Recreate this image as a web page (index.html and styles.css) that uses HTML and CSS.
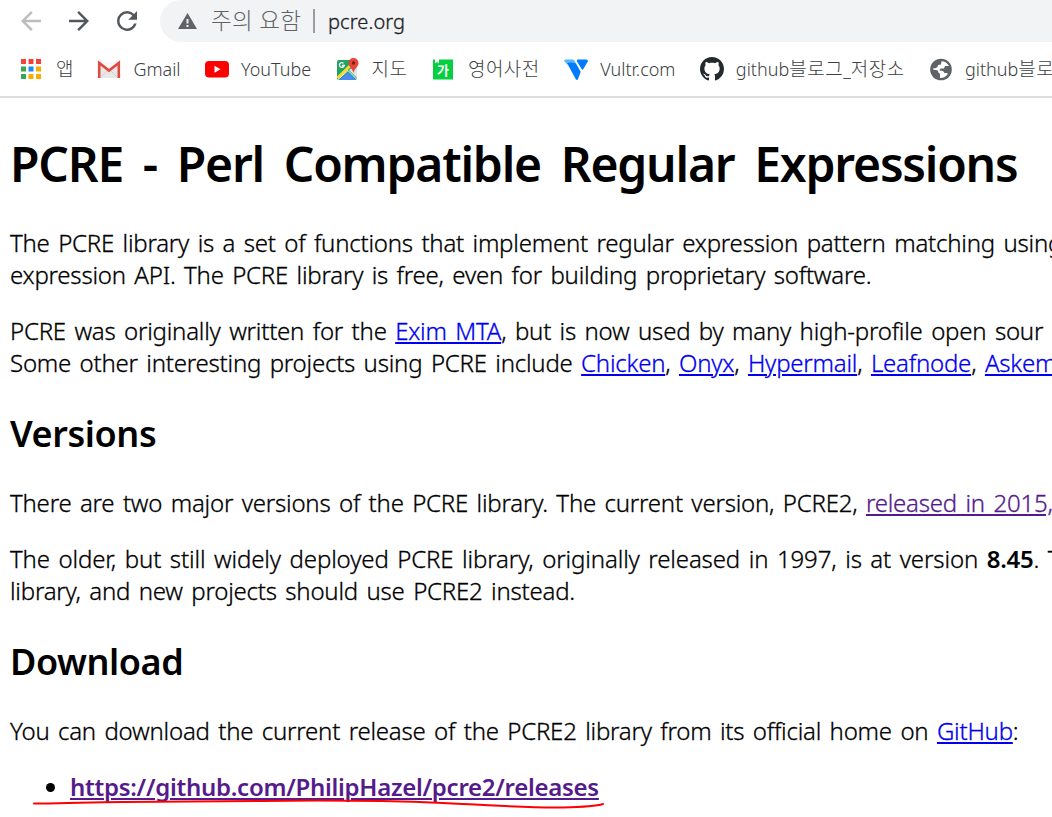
FILE: index.html
```html
<!DOCTYPE html>
<html lang="ko">
<head>
  <meta charset="UTF-8" />
  <meta name="viewport" content="width=device-width, initial-scale=1.0" />
  <title>PCRE - Perl Compatible Regular Expressions</title>
  <link rel="stylesheet" href="styles.css">
</head>
<body>
  <header class="browser">
    <div class="toolbar">
      <div class="nav-buttons">
        <svg class="nav-icon disabled" viewBox="0 0 24 24"><path d="M20 11H7.8l5.6-5.6L12 4l-8 8 8 8 1.4-1.4L7.8 13H20z"/></svg>
        <svg class="nav-icon" viewBox="0 0 24 24"><path d="M12 4l-1.4 1.4 5.6 5.6H4v2h12.2l-5.6 5.6L12 20l8-8z"/></svg>
        <svg class="nav-icon" viewBox="0 0 24 24"><path d="M17.65 6.35A7.96 7.96 0 0 0 12 4a8 8 0 1 0 7.73 10h-2.08A6 6 0 1 1 12 6c1.66 0 3.14.69 4.22 1.78L13 11h7V4z"/></svg>
      </div>
      <div class="omnibox">
        <svg class="warning" viewBox="0 0 19 16"><path fill="#5f6368" d="M9.5 0L19 16H0z"/><path fill="#f1f3f4" d="M8.500 6h2v4.500h-2zM8.500 12h2v2h-2z"/></svg>
        <span class="security">주의 요함</span>
        <span class="divider"></span>
        <span class="url">pcre.org</span>
      </div>
    </div>

    <nav class="bookmarks">
      <div class="bookmark apps">
        <svg viewBox="0 0 24 24">
          <path fill="#f44336" d="M1 2h5v5H1zM8.500 2h5v5h-5zM16 2h5v5h-5z"/>
          <path fill="#34a853" d="M1 9.500h5v5H1zM1 17h5v5H1z"/>
          <path fill="#1e88f5" d="M8.500 9.500h5v5h-5z"/>
          <path fill="#f9ab00" d="M16 9.500h5v5h-5zM8.500 17h5v5h-5zM16 17h5v5h-5z"/>
        </svg>
        <span class="ko">앱</span>
      </div>
      <div class="bookmark">
        <svg viewBox="0 0 24 24">
          <path fill="#e8e8e8" d="M2 5h20v16H2z"/>
          <path fill="#f8f8f8" d="M3 5h18l-9 8z"/>
          <path fill="none" stroke="#d0d0d0" d="M4 20l6-6M20 20l-6-6"/>
          <path fill="none" stroke="#e04a3f" stroke-width="2.600" d="M2.200 21V6L12 13.500 21.800 6v15"/>
        </svg>
        <span>Gmail</span>
      </div>
      <div class="bookmark">
        <svg viewBox="0 0 24 24">
          <rect y="4" width="24" height="16.500" rx="4" fill="#f00"/>
          <path fill="#fff" d="M9.500 8.700v7l6-3.500z"/>
        </svg>
        <span>YouTube</span>
      </div>
      <div class="bookmark">
        <svg viewBox="0 0 24 24">
          <rect x="1" y="3" width="20" height="20" rx="2" fill="#1fa463"/>
          <path fill="#e3e5e8" d="M21 8v13L13 13z"/>
          <path fill="#4a8af4" d="M3 23l9-8 8 8z"/>
          <path fill="none" stroke="#fff" stroke-width="1" d="M2 22.500l10-9 9 9"/>
          <path fill="none" stroke="#fdd835" stroke-width="3" d="M1.500 21L15 8"/>
          <path fill="none" stroke="#fff" stroke-width="1.300" d="M7.500 6.200A2.400 2.400 0 1 0 8.200 8.500H6"/>
          <path fill="#e5443a" d="M17.500 1a5 5 0 0 1 5 5c0 4-4 5-5 10-1-5-5-6-5-10a5 5 0 0 1 5-5z"/>
          <circle cx="17.500" cy="6" r="1.700" fill="#7b1f1a"/>
        </svg>
        <span class="ko">지도</span>
      </div>
      <div class="bookmark">
        <svg viewBox="0 0 24 24">
          <path fill="#03cf3f" d="M1 2.500h2v4l2-1.500 2 1.500v-4h14v20H1z"/>
          <text class="dict-glyph" x="5" y="18">가</text>
        </svg>
        <span class="ko">영어사전</span>
      </div>
      <div class="bookmark">
        <svg viewBox="0 0 24 24">
          <path fill="#51b9ff" d="M1.200 2.500H9q1 0 1.500.8L13 7.200 4 8 .3 4.300q-.5-1.500.9-1.800z"/>
          <path fill="#007bfc" d="M3 6l4-.5 5.500 1L17 14l-3.200 8.500q-1 1-2-.2z"/>
          <path fill="#fff" d="M10.800 2l6.800 11.300-.9 1.400L9.500 2z"/>
          <path fill="#007bfc" d="M13.500 2.500h9q1.700.3 1.300 2l-4.600 7.800q-.9.800-1.600-.2L12.700 4q0-1 .8-1.500z"/>
        </svg>
        <span>Vultr.com</span>
      </div>
      <div class="bookmark">
        <svg viewBox="0 0 16 16"><path fill="#24292e" d="M8 0C3.580 0 0 3.580 0 8c0 3.540 2.290 6.530 5.470 7.590.4.070.55-.17.55-.38 0-.19-.01-.82-.01-1.490-2.010.37-2.530-.49-2.690-.94-.09-.23-.48-.94-.82-1.130-.28-.15-.68-.52-.01-.53.63-.01 1.080.58 1.230.82.72 1.210 1.870.87 2.330.66.07-.52.28-.87.51-1.070-1.780-.2-3.640-.89-3.640-3.950 0-.87.31-1.590.82-2.150-.08-.2-.36-1.020.08-2.120 0 0 .67-.21 2.200.82.64-.18 1.320-.27 2-.27s1.360.09 2 .27c1.530-1.040 2.200-.82 2.200-.82.44 1.100.16 1.920.08 2.120.51.56.82 1.270.82 2.150 0 3.070-1.870 3.750-3.650 3.950.29.25.54.73.54 1.480 0 1.070-.01 1.930-.01 2.200 0 .21.15.46.55.38A8.010 8.010 0 0 0 16 8c0-4.420-3.580-8-8-8z"/></svg>
        <span>github<span class="ko">블로그</span>_<span class="ko">저장소</span></span>
      </div>
      <div class="bookmark">
        <svg viewBox="0 0 24 24">
          <circle cx="12" cy="12.500" r="10.800" fill="#5f6368"/>
          <path fill="#fff" d="M12.500 4.200q5 .2 7.500 4.800h-4l-1 2.500h-3.500l-1 2 3.500.5 1.500 2h3v1.500q-3 3.600-7.500 3.500v-4l-2-2v-1.500L4 12.500v-1l3-.5 1.500-1 .5-2 3-.5z"/>
        </svg>
        <span>github<span class="ko">블로</span></span>
      </div>
    </nav>
  </header>

  <main class="page">
    <h1>PCRE - Perl Compatible Regular Expressions</h1>
    <p>The PCRE library is a set of functions that implement regular expression pattern matching using<br>
    expression API. The PCRE library is free, even for building proprietary software.</p>
    <p>PCRE was originally written for the <a href="#">Exim MTA</a>, but is now used by many high-profile open sour<br>
    Some other interesting projects using PCRE include <a href="#">Chicken</a>, <a href="#">Onyx</a>, <a href="#">Hypermail</a>, <a href="#">Leafnode</a>, <a href="#">Askem</a></p>

    <h2>Versions</h2>
    <p>There are two major versions of the PCRE library. The current version, PCRE2, <a class="visited" href="#">released in 2015,</a></p>
    <p><span class="loose">The older, but still widely deployed PCRE library, originally released in 1997, is at version <b>8.45</b>. T</span><br>
    library, and new projects should use PCRE2 instead.</p>

    <h2>Download</h2>
    <p>You can download the current release of the PCRE2 library from its official home on <a href="#">GitHub</a>:</p>
    <ul>
      <li>
        <a class="visited" href="#"><b>https://github.com/PhilipHazel/pcre2/releases</b></a>
        <svg class="marker" viewBox="0 0 572 12"><path d="M1 4.500C30 5 55 3 90 3L230 2C300 1 360 2 410 4C460 6 490 9 530 8.500C550 8 562 7.500 570 5"/></svg>
      </li>
    </ul>
  </main>
</body>
</html>
```
FILE: styles.css
```css
body {
  margin: 0;
  height: 817px;
  overflow: hidden;
  background-color: #fff;
  color: #000;
  font-family: "Noto Sans", "Noto Sans CJK KR", sans-serif;
  font-weight: 300;
}

.browser {
  height: 96px;
  border-bottom: 2px solid #dadce0;
  overflow: hidden;
}

.toolbar {
  display: flex;
  height: 42px;
}

.nav-buttons {
  display: flex;
  align-items: center;
  gap: 18px;
  width: 144px;
  padding-left: 16px;
  flex-shrink: 0;
}

.nav-icon {
  width: 30px;
  height: 30px;
  flex-shrink: 0;
  fill: #54585d;
}

.nav-icon.disabled {
  fill: #babcbe;
}

.omnibox {
  display: flex;
  align-items: center;
  flex: 1;
  padding-left: 18px;
  background-color: #f1f3f4;
  border-radius: 21px 0 0 21px;
  white-space: nowrap;
}

.warning {
  width: 19px;
  height: 16px;
  margin-right: 14px;
}

.security {
  width: 102px;
  color: #5f6368;
  font-size: 22.5px;
  line-height: 42px;
  letter-spacing: 0.3px;
}

.divider {
  width: 2px;
  height: 24px;
  margin-right: 13px;
  background-color: #9a9da1;
}

.url {
  color: #202124;
  font-size: 20px;
  letter-spacing: 0.1px;
  -webkit-text-stroke: 0.3px;
}

.bookmarks {
  display: flex;
  align-items: center;
  gap: 24.4px;
  height: 54px;
  padding-left: 20px;
}

.bookmark {
  display: flex;
  align-items: center;
  gap: 12px;
  flex-shrink: 0;
  color: #3c4043;
  font-size: 18px;
  line-height: 24px;
  white-space: nowrap;
}

.bookmark.apps {
  width: 53px;
}

.bookmark svg {
  width: 24px;
  height: 24px;
  flex-shrink: 0;
}

.ko {
  font-size: 19px;
  letter-spacing: 0.5px;
}

.dict-glyph {
  fill: #fff;
  font: 700 13px "Noto Sans CJK KR", sans-serif;
}

.page {
  padding: 34px 0 0 10px;
  font-size: 24px;
  line-height: 32px;
  letter-spacing: -0.22px;
  word-spacing: 2.5px;
  white-space: nowrap;
}

p {
  margin: 24px 0;
  -webkit-text-stroke: 0.3px;
}

.loose {
  letter-spacing: -0.13px;
}

h1,
h2,
b {
  font-weight: 600;
  letter-spacing: -0.0115em;
  -webkit-text-stroke: 0;
}

h1 {
  margin: 0 0 31px;
  font-size: 48px;
  line-height: 64px;
  letter-spacing: -1.2px;
  word-spacing: 8.5px;
}

h2 {
  margin: 31px 0 29px;
  font-size: 36px;
  line-height: 48px;
}

a {
  color: #0000ee;
  text-decoration-thickness: 2px;
  text-underline-offset: 2px;
}

a.visited {
  color: #551a8b;
}

ul {
  margin: 24px 0;
  padding-left: 60px;
}

li {
  position: relative;
}

/* hand-drawn line under the release link */
.marker {
  position: absolute;
  left: -37px;
  top: 28px;
  width: 572px;
  height: 12px;
  fill: none;
  stroke: #f00;
  stroke-width: 2;
  stroke-linecap: round;
}
```
